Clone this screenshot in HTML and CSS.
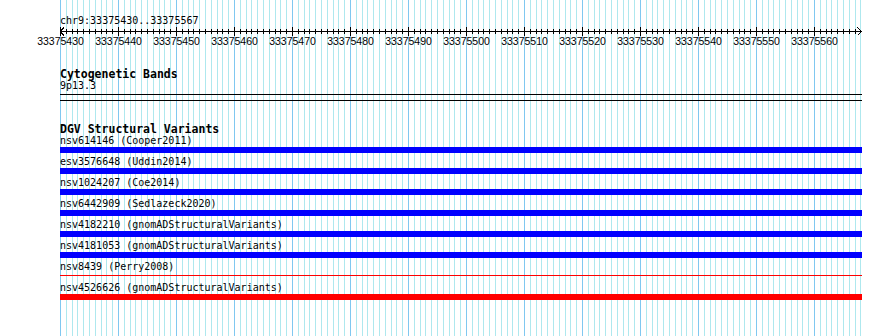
FILE: index.html
```html
<!DOCTYPE html>
<html lang="en">
<head>
    <meta charset="UTF-8">
    <meta name="viewport" content="width=device-width, initial-scale=1.0">
    <title>chr9:33375430..33375567</title>
    <link rel="stylesheet" href="styles.css">
</head>
<body>
    <div class="view">
        <svg class="grid" id="grid" width="890" height="336"></svg>

        <div class="content">
            <p class="locus">chr9:33375430..33375567</p>
            <svg class="ruler" id="ruler" width="890" height="22"></svg>

            <div class="track cyto">
                <p class="track-title">Cytogenetic Bands</p>
                <p class="label">9p13.3</p>
                <div class="band"></div>
                <div class="band gap"></div>
            </div>

            <div class="track dgv">
                <p class="track-title">DGV Structural Variants</p>

                <div class="feature">
                    <p class="label">nsv614146 (Cooper2011)</p>
                    <div class="bar blue"></div>
                </div>
                <div class="feature">
                    <p class="label">esv3576648 (Uddin2014)</p>
                    <div class="bar blue"></div>
                </div>
                <div class="feature">
                    <p class="label">nsv1024207 (Coe2014)</p>
                    <div class="bar blue"></div>
                </div>
                <div class="feature">
                    <p class="label">nsv6442909 (Sedlazeck2020)</p>
                    <div class="bar blue"></div>
                </div>
                <div class="feature">
                    <p class="label">nsv4182210 (gnomADStructuralVariants)</p>
                    <div class="bar blue"></div>
                </div>
                <div class="feature">
                    <p class="label">nsv4181053 (gnomADStructuralVariants)</p>
                    <div class="bar blue"></div>
                </div>
                <div class="feature">
                    <p class="label">nsv8439 (Perry2008)</p>
                    <div class="bar red thin"></div>
                </div>
                <div class="feature">
                    <p class="label">nsv4526626 (gnomADStructuralVariants)</p>
                    <div class="bar red"></div>
                </div>
            </div>
        </div>
    </div>

    <script>
        const start = 33375430;
        const end = 33375567;
        const left = 60;
        const bpWidth = 5.8;
        const svgNS = 'http://www.w3.org/2000/svg';

        function addLine(svg, x1, y1, x2, y2, color) {
            const l = document.createElementNS(svgNS, 'line');
            l.setAttribute('x1', x1);
            l.setAttribute('y1', y1);
            l.setAttribute('x2', x2);
            l.setAttribute('y2', y2);
            l.setAttribute('stroke', color);
            svg.appendChild(l);
        }

        function xFor(i) {
            return Math.round(left + i * bpWidth) + 0.5;
        }

        // background grid, one line per base
        const grid = document.getElementById('grid');
        for (let i = 0; i <= end - start + 1; i++) {
            const major = i % 10 === 0;
            addLine(grid, xFor(i), 0, xFor(i), 336, major ? '#80c8f0' : '#aee8ee');
        }

        // ruler
        const ruler = document.getElementById('ruler');
        const rightEdge = 861.5;
        addLine(ruler, left, 4.5, rightEdge, 4.5, '#000');
        addLine(ruler, left, 4.5, left + 4, 0.5, '#000');
        addLine(ruler, left, 4.5, left + 4, 8.5, '#000');
        addLine(ruler, rightEdge, 4.5, rightEdge - 4, 0.5, '#000');
        addLine(ruler, rightEdge, 4.5, rightEdge - 4, 8.5, '#000');

        for (let i = 0; i <= end - start; i++) {
            const x = xFor(i);
            if (i % 10 === 0) {
                addLine(ruler, x, 0, x, 9, '#000');
                const t = document.createElementNS(svgNS, 'text');
                t.setAttribute('x', x);
                t.setAttribute('y', 18);
                t.setAttribute('class', 'tick-label');
                t.textContent = start + i;
                ruler.appendChild(t);
            } else {
                addLine(ruler, x, 2, x, 7, '#000');
            }
        }
    </script>
</body>
</html>
```

FILE: styles.css
```css
body {
    margin: 0;
    background-color: #ffffff;
    color: #000000;
    font-family: "DejaVu Sans Mono", "Liberation Mono", monospace;
}

p {
    margin: 0;
}

.view {
    position: relative;
    width: 890px;
    height: 336px;
    overflow: hidden;
}

.grid {
    position: absolute;
    top: 0;
    left: 0;
    z-index: 0;
    shape-rendering: crispEdges;
}

.content {
    position: relative;
    z-index: 1;
    padding-top: 15px;
}

.locus {
    margin-left: 60px;
    font-size: 10px;
    line-height: 12px;
}

.ruler {
    display: block;
    shape-rendering: crispEdges;
}

.tick-label {
    font-family: "Liberation Sans", Arial, sans-serif;
    font-size: 10.5px;
    text-anchor: middle;
    fill: #000;
}

.track {
    margin-left: 60px;
    width: 802px;
}

.cyto {
    margin-top: 19px;
}

.dgv {
    margin-top: 22px;
}

.track-title {
    font-size: 11.5px;
    font-weight: bold;
    line-height: 12px;
}

.label {
    font-size: 10px;
    line-height: 12px;
    white-space: nowrap;
}

.band {
    height: 1px;
    margin-top: 2px;
    background-color: #000000;
}

.band.gap {
    margin-top: 5px;
}

.bar {
    height: 6px;
    margin-bottom: 3px;
}

.bar.blue {
    background-color: #0000ff;
}

.bar.red {
    background-color: #ff0000;
}

.bar.thin {
    height: 1px;
    margin-top: 2px;
    margin-bottom: 6px;
}
```
